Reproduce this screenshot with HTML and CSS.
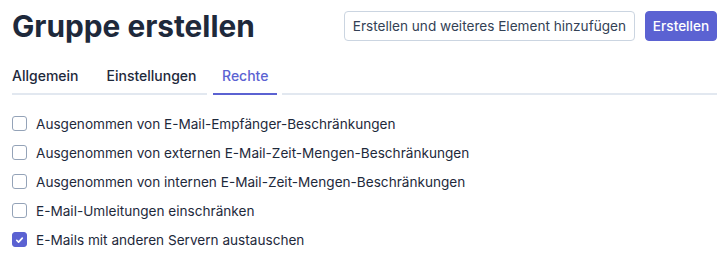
FILE: index.html
```html
<!DOCTYPE html>
<html lang="de">
<head>
<meta charset="utf-8">
<title>Gruppe erstellen</title>
<link rel="stylesheet" href="styles.css">
</head>
<body>
<div class="page">
  <header class="header">
    <h1 class="title">Gruppe erstellen</h1>
    <div class="actions">
      <button class="btn btn-outline" type="button">Erstellen und weiteres Element hinzufügen</button>
      <button class="btn btn-primary" type="button">Erstellen</button>
    </div>
  </header>
  <nav class="tabs">
    <div class="tab-group">
      <a class="tab tab-first">Allgemein</a>
      <a class="tab tab-second">Einstellungen</a>
    </div>
    <a class="tab tab-active">Rechte</a>
    <div class="tab-fill"></div>
  </nav>
  <ul class="options">
    <li class="option"><span class="box"></span><span class="label">Ausgenommen von E-Mail-Empfänger-Beschränkungen</span></li>
    <li class="option"><span class="box"></span><span class="label">Ausgenommen von externen E-Mail-Zeit-Mengen-Beschränkungen</span></li>
    <li class="option"><span class="box"></span><span class="label">Ausgenommen von internen E-Mail-Zeit-Mengen-Beschränkungen</span></li>
    <li class="option"><span class="box"></span><span class="label">E-Mail-Umleitungen einschränken</span></li>
    <li class="option"><span class="box box-checked"><svg viewBox="0 0 14 14" width="14" height="14"><path d="M4 7.3l2 2 4-4.3" fill="none" stroke="#fff" stroke-width="1.8" stroke-linecap="round" stroke-linejoin="round"/></svg></span><span class="label">E-Mails mit anderen Servern austauschen</span></li>
  </ul>
</div>
</body>
</html>
```

FILE: styles.css
```css
* { box-sizing: border-box; }
html, body { margin: 0; padding: 0; background: #ffffff; }
body {
  font-family: Inter, "Noto Sans", "Liberation Sans", sans-serif;
  color: #1f2937;
  width: 726px;
  height: 261px;
  overflow: hidden;
}
.page { padding: 11px 9px 0 12px; }
.header {
  display: flex;
  justify-content: space-between;
  align-items: center;
  height: 30px;
}
.title {
  margin: 0;
  font-size: 29.8px;
  font-weight: 700;
  color: #1e293b;
  letter-spacing: 0;
  line-height: 30px;
}
.actions { display: flex; gap: 10px; }
.btn {
  font-family: inherit;
  font-size: 13.6px;
  height: 30px;
  border-radius: 4px;
  cursor: pointer;
}
.btn-outline {
  background: #fff;
  color: #334155;
  border: 1px solid #cbd5e1;
  font-weight: 400;
  padding: 0 8px;
}
.btn-primary {
  background: #5b62d2;
  color: #fff;
  border: 1px solid #5b62d2;
  font-weight: 500;
  width: 72px;
  padding: 0;
}
.tabs {
  display: flex;
  margin-top: 22px;
  height: 32px;
  align-items: stretch;
}
.tab {
  font-size: 14px;
  font-weight: 500;
  color: #1e293b;
  line-height: 20px;
  padding-top: 3px;
  display: block;
}
.tab-group {
  display: flex;
  border-bottom: 2px solid #e2e8f0;
  width: 195px;
  margin-right: 6px;
}
.tab-second { margin-left: 28px; }
.tab-active {
  color: #5b62d2;
  border-bottom: 2px solid #5b62d2;
  padding-left: 9px;
  padding-right: 9px;
}
.tab-fill {
  flex: 1;
  margin-left: 5px;
  border-bottom: 2px solid #e2e8f0;
}
.options {
  list-style: none;
  margin: 14px 0 0;
  padding: 0;
}
.option {
  display: flex;
  align-items: center;
  height: 29px;
  font-size: 13.6px;
  color: #1e293b;
}
.box {
  width: 15px;
  height: 15px;
  border: 1px solid #94a3b8;
  border-radius: 3px;
  margin-right: 9px;
  flex: none;
  display: flex;
  align-items: center;
  justify-content: center;
}
.box-checked {
  background: #5b62d2;
  border-color: #5b62d2;
}
.box-checked svg { display: block; }
```
